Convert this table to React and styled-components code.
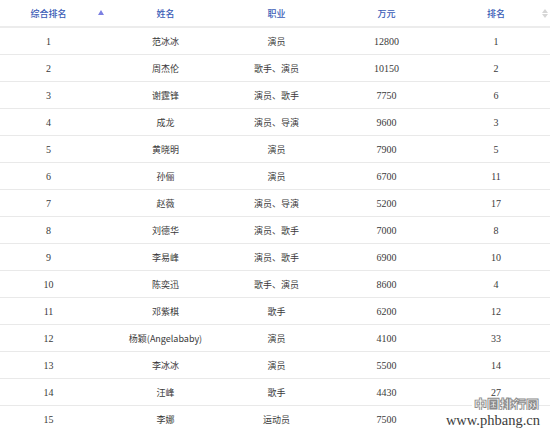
import React from "react";
import styled, { createGlobalStyle } from "styled-components";

const GlobalStyle = createGlobalStyle`
  body {
    margin: 0;
    background: #fff;
    font-family: "Noto Sans CJK SC", "Liberation Serif", serif;
  }
`;

const Page = styled.div`
  position: relative;
  width: 550px;
  height: 430px;
  overflow: hidden;
`;

const Table = styled.table`
  width: 538px;
  border-collapse: collapse;
  table-layout: fixed;
`;

const HeadCell = styled.th`
  position: relative;
  width: ${(p) => p.w}px;
  height: 26px;
  padding: 0 ${(p) => p.pr || 0}px 0 0;
  text-align: center;
  font-size: 9px;
  font-weight: 500;
  color: #3a5cb6;
  border-bottom: 2px solid #ececec;
`;

const Cell = styled.td`
  height: 26px;
  padding: 0 ${(p) => p.pr || 0}px 0 0;
  text-align: center;
  font-size: ${(p) => (p.num ? "10px" : "9px")};
  font-family: ${(p) =>
    p.num ? '"Liberation Serif", serif' : '"Noto Sans CJK SC", "Liberation Serif", serif'};
  color: #3a3a3a;
  border-bottom: 1px solid #e9e9e9;
  white-space: nowrap;
`;

const SortUp = styled.span`
  position: absolute;
  right: 6px;
  top: 10px;
  width: 0;
  height: 0;
  border-left: 3.5px solid transparent;
  border-right: 3.5px solid transparent;
  border-bottom: 5px solid #7c80e2;
`;

const SortBoth = styled.span`
  position: absolute;
  right: 3px;
  top: 9px;
  display: flex;
  flex-direction: column;
  gap: 1px;

  &::before,
  &::after {
    content: "";
    width: 0;
    height: 0;
    border-left: 3px solid transparent;
    border-right: 3px solid transparent;
  }
  &::before {
    border-bottom: 4px solid #d6d6d6;
  }
  &::after {
    border-top: 4px solid #d6d6d6;
  }
`;

const Watermark = styled.div`
  position: absolute;
  right: 10px;
  bottom: 3px;
  display: flex;
  flex-direction: column;
  align-items: flex-end;
  line-height: 1;
`;

const MarkTitle = styled.div`
  font-family: "Noto Sans CJK SC", sans-serif;
  font-size: 13px;
  font-weight: 900;
  color: #fff;
  -webkit-text-stroke: 0.9px #8a8a8a;
  margin-right: 1px;
  background: #fff;
  padding-left: 2px;
`;

const MarkUrl = styled.div`
  font-family: "Liberation Serif", serif;
  font-size: 14.5px;
  color: #3c3c3c;
  background: #fff;
  padding: 3px 0 0 2px;
`;

const rows = [
  [1, "范冰冰", "演员", 12800, 1],
  [2, "周杰伦", "歌手、演员", 10150, 2],
  [3, "谢霆锋", "演员、歌手", 7750, 6],
  [4, "成龙", "演员、导演", 9600, 3],
  [5, "黄晓明", "演员", 7900, 5],
  [6, "孙俪", "演员", 6700, 11],
  [7, "赵薇", "演员、导演", 5200, 17],
  [8, "刘德华", "演员、歌手", 7000, 8],
  [9, "李易峰", "演员、歌手", 6900, 10],
  [10, "陈奕迅", "歌手、演员", 8600, 4],
  [11, "邓紫棋", "歌手", 6200, 12],
  [12, "杨颖(Angelababy)", "演员", 4100, 33],
  [13, "李冰冰", "演员", 5500, 14],
  [14, "汪峰", "歌手", 4430, 27],
  [15, "李娜", "运动员", 7500, 15],
];

export default function App() {
  return (
    <Page>
      <GlobalStyle />
      <Table>
        <thead>
          <tr>
            <HeadCell w={97} pr={13}>
              综合排名
              <SortUp />
            </HeadCell>
            <HeadCell w={111}>姓名</HeadCell>
            <HeadCell w={111}>职业</HeadCell>
            <HeadCell w={109}>万元</HeadCell>
            <HeadCell w={110}>
              排名
              <SortBoth />
            </HeadCell>
          </tr>
        </thead>
        <tbody>
          {rows.map((r) => (
            <tr key={r[0]}>
              <Cell num pr={13}>{r[0]}</Cell>
              <Cell>{r[1]}</Cell>
              <Cell>{r[2]}</Cell>
              <Cell num>{r[3]}</Cell>
              <Cell num>{r[4]}</Cell>
            </tr>
          ))}
        </tbody>
      </Table>
      <Watermark>
        <MarkTitle>中国排行网</MarkTitle>
        <MarkUrl>www.phbang.cn</MarkUrl>
      </Watermark>
    </Page>
  );
}
